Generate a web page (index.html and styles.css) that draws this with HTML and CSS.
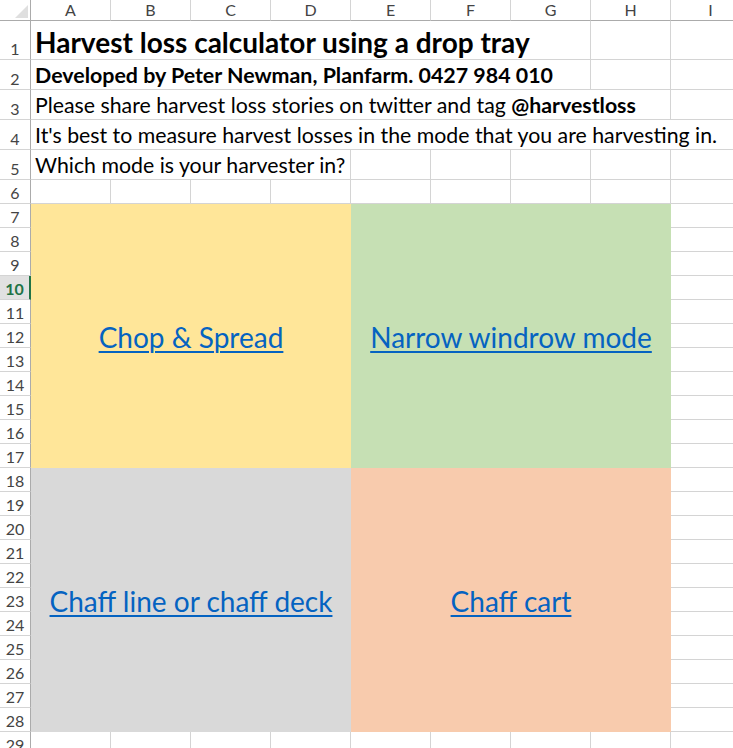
FILE: index.html
```html
<!DOCTYPE html>
<html lang="en">
<head>
    <meta charset="UTF-8">
    <title>Harvest loss calculator</title>
    <link rel="stylesheet" href="styles.css">
</head>
<body>
    <div class="sheet">
        <!-- column headers -->
        <div class="corner"><span class="tri"></span></div>
        <div class="ch">A</div><div class="ch">B</div><div class="ch">C</div><div class="ch">D</div>
        <div class="ch">E</div><div class="ch">F</div><div class="ch">G</div><div class="ch">H</div><div class="ch">I</div>

        <div class="rh">1</div>
        <div class="cell txt title span7">Harvest loss calculator using a drop tray</div>
        <div class="cell"></div><div class="cell"></div>

        <div class="rh">2</div>
        <div class="cell txt sub span7">Developed by Peter Newman, Planfarm. 0427 984 010</div>
        <div class="cell"></div><div class="cell"></div>

        <div class="rh">3</div>
        <div class="cell txt span8">Please share harvest loss stories on twitter and tag&nbsp;<b>@harvestloss</b></div>
        <div class="cell"></div>

        <div class="rh">4</div>
        <div class="cell txt span9">It's best to measure harvest losses in the mode that you are harvesting in.</div>

        <div class="rh">5</div>
        <div class="cell txt span4">Which mode is your harvester in?</div>
        <div class="cell"></div><div class="cell"></div><div class="cell"></div><div class="cell"></div><div class="cell"></div>

        <div class="rh">6</div>
        <div class="cell"></div><div class="cell"></div><div class="cell"></div><div class="cell"></div><div class="cell"></div>
        <div class="cell"></div><div class="cell"></div><div class="cell"></div><div class="cell"></div>

        <!-- mode buttons -->
        <div class="block yellow top left"><a href="#">Chop &amp; Spread</a></div>
        <div class="block green top right"><a href="#">Narrow windrow mode</a></div>
        <div class="block grey bottom left"><a href="#">Chaff line or chaff deck</a></div>
        <div class="block orange bottom right"><a href="#">Chaff cart</a></div>

        <div class="rh">7</div><div class="cell"></div>
        <div class="rh">8</div><div class="cell"></div>
        <div class="rh">9</div><div class="cell"></div>
        <div class="rh sel">10</div><div class="cell"></div>
        <div class="rh">11</div><div class="cell"></div>
        <div class="rh">12</div><div class="cell"></div>
        <div class="rh">13</div><div class="cell"></div>
        <div class="rh">14</div><div class="cell"></div>
        <div class="rh">15</div><div class="cell"></div>
        <div class="rh">16</div><div class="cell"></div>
        <div class="rh">17</div><div class="cell"></div>
        <div class="rh">18</div><div class="cell"></div>
        <div class="rh">19</div><div class="cell"></div>
        <div class="rh">20</div><div class="cell"></div>
        <div class="rh">21</div><div class="cell"></div>
        <div class="rh">22</div><div class="cell"></div>
        <div class="rh">23</div><div class="cell"></div>
        <div class="rh">24</div><div class="cell"></div>
        <div class="rh">25</div><div class="cell"></div>
        <div class="rh">26</div><div class="cell"></div>
        <div class="rh">27</div><div class="cell"></div>
        <div class="rh">28</div><div class="cell"></div>

        <div class="rh">29</div>
        <div class="cell"></div><div class="cell"></div><div class="cell"></div><div class="cell"></div><div class="cell"></div>
        <div class="cell"></div><div class="cell"></div><div class="cell"></div><div class="cell"></div>
    </div>
</body>
</html>
```

FILE: styles.css
```css
html, body {
    margin: 0;
    padding: 0;
    overflow: hidden;
    background-color: #fff;
}

body {
    font-family: Lato, "Liberation Sans", sans-serif;
    color: #000;
}

.sheet {
    display: grid;
    grid-template-columns: 31px repeat(9, 80px);
    grid-template-rows: 21px 39px 30px 30px 30px 30px 24px repeat(23, 24px);
    width: 751px;
}

.sheet > div {
    box-sizing: border-box;
}

.corner {
    position: relative;
    border-right: 1px solid #ababab;
    border-bottom: 1px solid #ababab;
}

.tri {
    position: absolute;
    right: 2px;
    bottom: 2px;
    width: 0;
    height: 0;
    border-left: 13px solid transparent;
    border-bottom: 13px solid #dfdfdf;
}

.ch {
    text-align: center;
    font-size: 16px;
    line-height: 20px;
    color: #444;
    border-right: 1px solid #d4d4d4;
    border-bottom: 1px solid #ababab;
}

.rh {
    display: flex;
    align-items: flex-end;
    justify-content: center;
    padding-bottom: 1px;
    font-size: 16px;
    color: #444;
    border-right: 1px solid #ababab;
    border-bottom: 1px solid #d4d4d4;
}

.rh.sel {
    background-color: #e1e1e1;
    color: #217346;
    font-weight: bold;
    border-right: 2px solid #217346;
}

.cell {
    border-right: 1px solid #d4d4d4;
    border-bottom: 1px solid #d4d4d4;
}

.txt {
    display: flex;
    align-items: flex-end;
    padding: 0 0 1px 4px;
    font-size: 21.3px;
    white-space: nowrap;
}

.title {
    font-size: 28px;
    font-weight: bold;
    padding-bottom: 0;
}

.sub {
    font-size: 21.4px;
    font-weight: bold;
}

.span4 { grid-column: span 4; }
.span7 { grid-column: span 7; }
.span8 { grid-column: span 8; }
.span9 { grid-column: span 9; }

.block {
    display: flex;
    align-items: center;
    justify-content: center;
    padding-top: 2px;
    font-size: 28px;
}

.block a {
    color: #0563c1;
    text-decoration: underline;
    text-underline-offset: 3px;
    text-decoration-thickness: 2px;
}

.top { grid-row: 8 / span 11; }
.bottom { grid-row: 19 / span 11; }
.left { grid-column: 2 / span 4; }
.right { grid-column: 6 / span 4; }

.yellow { background-color: #ffe699; }
.green { background-color: #c6e0b4; }
.grey { background-color: #d9d9d9; }
.orange { background-color: #f8cbad; }
```
